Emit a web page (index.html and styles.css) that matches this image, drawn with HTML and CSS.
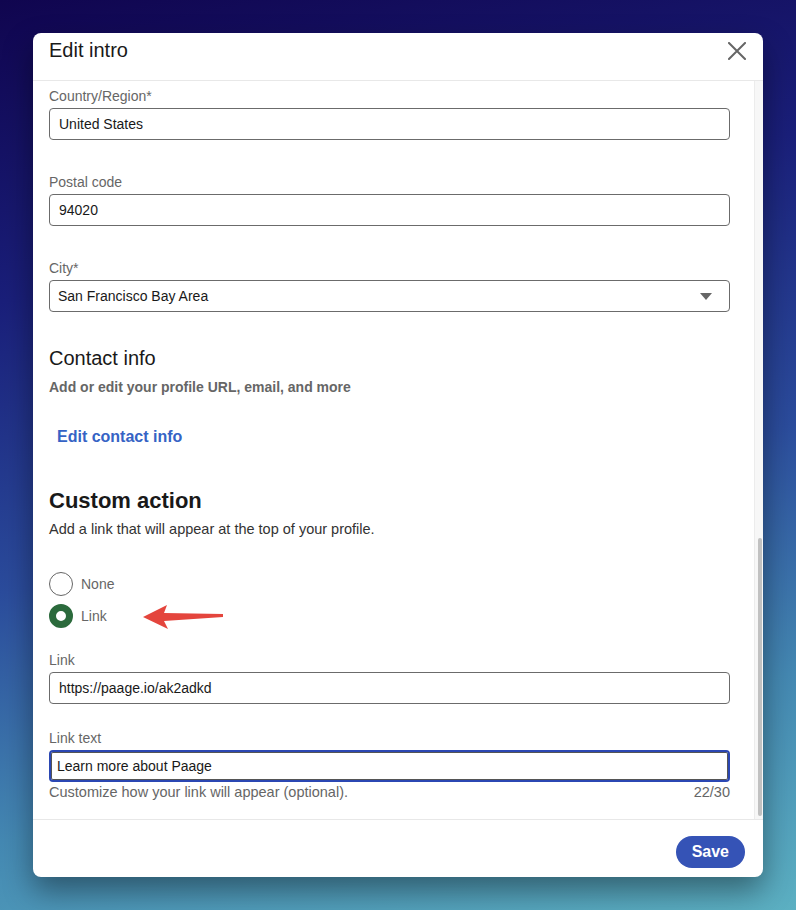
FILE: index.html
```html
<!DOCTYPE html>
<html lang="en">
<head>
  <meta charset="UTF-8" />
  <meta name="viewport" content="width=device-width, initial-scale=1" />
  <title>Edit intro</title>
  <link rel="stylesheet" href="styles.css">
</head>
<body>

  <div class="modal">
    <div class="modal-header">
      <h2 class="title">Edit intro</h2>
      <button class="close" aria-label="Dismiss">
        <svg width="18" height="18" viewBox="0 0 18 18">
          <path d="M1 1 L17 17 M17 1 L1 17" stroke="#666" stroke-width="2" stroke-linecap="square" fill="none"/>
        </svg>
      </button>
    </div>

    <div class="modal-body">
      <div class="form">
        <div class="field">
          <label class="label">Country/Region*</label>
          <input class="input" type="text" value="United States">
        </div>

        <div class="field">
          <label class="label">Postal code</label>
          <input class="input" type="text" value="94020">
        </div>

        <div class="field">
          <label class="label">City*</label>
          <div class="select-wrap">
            <select class="input select">
              <option>San Francisco Bay Area</option>
            </select>
            <svg class="caret" width="12" height="7" viewBox="0 0 12 7">
              <path d="M0 0 L12 0 L6 7 Z" fill="#666"/>
            </svg>
          </div>
        </div>

        <h3 class="section-title">Contact info</h3>
        <p class="section-sub">Add or edit your profile URL, email, and more</p>
        <button class="link-btn">Edit contact info</button>

        <h3 class="custom-title">Custom action</h3>
        <p class="custom-sub">Add a link that will appear at the top of your profile.</p>

        <div class="radios">
          <div class="radio-row">
            <span class="radio"></span>
            <span class="radio-label">None</span>
          </div>
          <div class="radio-row">
            <span class="radio checked"></span>
            <span class="radio-label">Link</span>
            <svg class="arrow" width="86" height="30" viewBox="0 0 86 30">
              <polygon points="3,15 27,3 24,11 83,12 83,15 24,19 28,27" fill="#e4453d"/>
            </svg>
          </div>
        </div>

        <div class="field link-field">
          <label class="label">Link</label>
          <input class="input" type="text" value="https://paage.io/ak2adkd">
        </div>

        <div class="field last">
          <label class="label">Link text</label>
          <input class="input focused" type="text" value="Learn more about Paage">
          <div class="helper">
            <span>Customize how your link will appear (optional).</span>
            <span>22/30</span>
          </div>
        </div>
      </div>

      <div class="track">
        <div class="thumb"></div>
      </div>
    </div>

    <div class="modal-footer">
      <button class="save">Save</button>
    </div>
  </div>

</body>
</html>
```

FILE: styles.css
```css
body {
  margin: 0;
  height: 910px;
  padding: 33px;
  box-sizing: border-box;
  display: flex;
  font-family: "Liberation Sans", Arial, sans-serif;
  background: linear-gradient(168deg, #10054f 0%, #1a1f7a 28%, #2b4c9c 55%, #4488b2 78%, #5cb0c2 100%);
}

.modal {
  flex: 1;
  display: flex;
  flex-direction: column;
  background: #fff;
  border-radius: 8px;
  overflow: hidden;
  box-shadow: 0 14px 30px rgba(0, 0, 0, 0.4);
}

.modal-header {
  height: 48px;
  box-sizing: border-box;
  padding: 5px 17px 0 16px;
  border-bottom: 1px solid #e8e8e8;
  display: flex;
  justify-content: space-between;
  align-items: flex-start;
}

.title {
  margin: 0;
  font-size: 20px;
  line-height: 24px;
  font-weight: 400;
  color: #191919;
}

.close {
  width: 18px;
  height: 18px;
  margin-top: 4px;
  padding: 0;
  border: 0;
  background: none;
  cursor: pointer;
}

.close svg {
  display: block;
}

.modal-body {
  flex: 1;
  min-height: 0;
  display: flex;
  overflow: hidden;
}

.form {
  flex: 1;
  padding: 5px 24px 0 16px;
}

.field {
  margin-bottom: 32px;
}

.label {
  display: block;
  font-size: 14px;
  line-height: 20px;
  color: #666;
  margin-bottom: 2px;
}

.input {
  display: block;
  width: 100%;
  height: 32px;
  box-sizing: border-box;
  padding: 0 9px;
  border: 1px solid #6b6b6b;
  border-radius: 4px;
  background: #fff;
  font-family: "Liberation Sans", Arial, sans-serif;
  font-size: 14px;
  color: #191919;
  outline: none;
}

.select-wrap {
  position: relative;
}

.select {
  appearance: none;
  -webkit-appearance: none;
  padding-left: 8px;
}

.caret {
  position: absolute;
  right: 18px;
  top: 13px;
}

.input.focused {
  border: 2px solid #2b47b3;
  box-shadow: inset 0 0 0 1px #555;
  padding-left: 6px;
}

.section-title {
  margin: 34px 0 0;
  font-size: 20px;
  line-height: 24px;
  font-weight: 400;
  color: #191919;
}

.section-sub {
  margin: 7px 0 0;
  font-size: 14px;
  line-height: 20px;
  font-weight: 700;
  color: #666;
}

.link-btn {
  display: block;
  margin-top: 24px;
  padding: 6px 8px;
  border: 0;
  border-radius: 4px;
  background: none;
  font-family: "Liberation Sans", Arial, sans-serif;
  font-size: 16px;
  line-height: 20px;
  font-weight: 700;
  color: #3563c5;
  cursor: pointer;
}

.custom-title {
  margin: 34px 0 0;
  font-size: 22px;
  line-height: 28px;
  font-weight: 700;
  color: #191919;
}

.custom-sub {
  margin: 4px 0 0;
  font-size: 14.5px;
  line-height: 20px;
  color: #333;
}

.radios {
  margin-top: 33px;
  display: flex;
  flex-direction: column;
  gap: 8px;
}

.radio-row {
  position: relative;
  display: flex;
  align-items: center;
  gap: 8px;
  height: 24px;
}

.radio {
  width: 24px;
  height: 24px;
  box-sizing: border-box;
  border: 1px solid #666;
  border-radius: 50%;
  background: #fff;
}

.radio.checked {
  border: 7px solid #2b6a3c;
}

.radio-label {
  font-size: 14px;
  color: #666;
}

.arrow {
  position: absolute;
  left: 91px;
  top: -2px;
}

.link-field {
  margin-top: 22px;
  margin-bottom: 24px;
}

.field.last {
  margin-bottom: 0;
}

.helper {
  display: flex;
  justify-content: space-between;
  font-size: 14.5px;
  line-height: 20px;
  color: #666;
}

.track {
  width: 9px;
  box-sizing: border-box;
  background: #f7f7f7;
  border-left: 1px solid #ececec;
  display: flex;
  flex-direction: column;
  justify-content: flex-end;
  padding-bottom: 3px;
}

.thumb {
  width: 4px;
  height: 278px;
  margin-left: 3px;
  border-radius: 3px;
  background: #c1c1c1;
}

.modal-footer {
  border-top: 1px solid #e8e8e8;
  padding: 16px 18px 9px;
  display: flex;
  justify-content: flex-end;
}

.save {
  height: 32px;
  padding: 0 16px;
  border: 0;
  border-radius: 16px;
  background: #3553b6;
  color: #fff;
  font-family: "Liberation Sans", Arial, sans-serif;
  font-size: 16px;
  font-weight: 700;
  cursor: pointer;
}
```
